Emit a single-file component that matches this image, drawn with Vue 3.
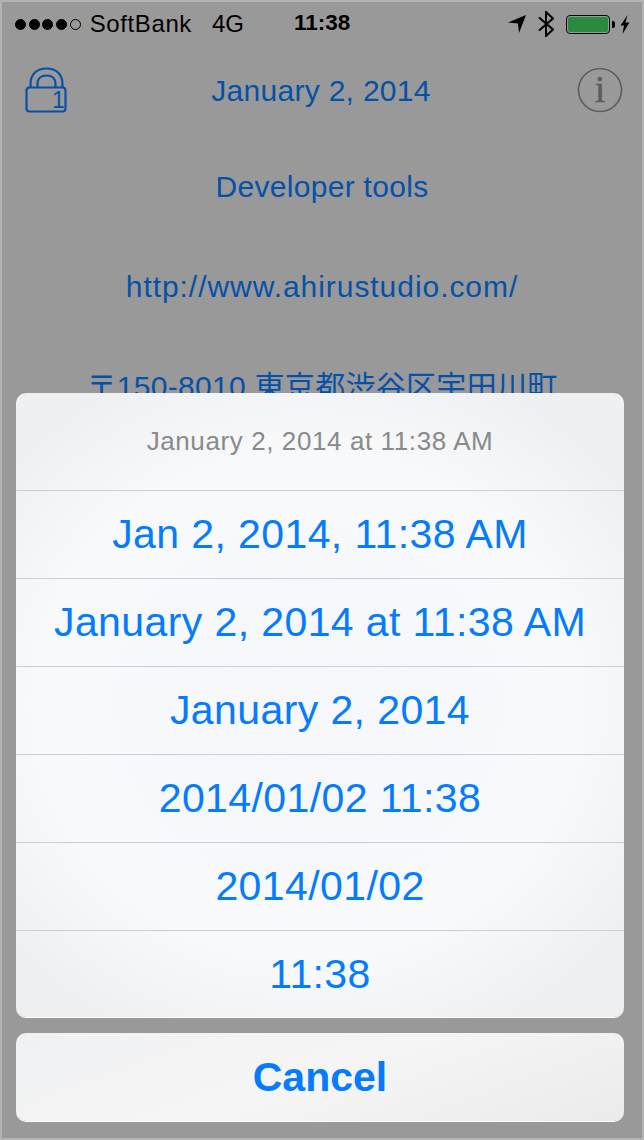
<script setup>
const options = [
  "Jan 2, 2014, 11:38 AM",
  "January 2, 2014 at 11:38 AM",
  "January 2, 2014",
  "2014/01/02 11:38",
  "2014/01/02",
  "11:38",
];
const signal = [1, 1, 1, 1, 0];
</script>

<template>
  <div class="screen">
    <div class="status">
      <div class="carrier">
        <span class="dots">
          <i v-for="(on, i) in signal" :key="i" class="dot" :class="{ on }"></i>
        </span>
        <span class="name">SoftBank</span>
        <span class="net">4G</span>
      </div>
      <div class="clock">11:38</div>
      <div class="tray">
        <svg class="arrow" width="18" height="18" viewBox="0 0 18 18">
          <path d="M0 7.500 L18 0 L11 18 L10 8.500 Z" fill="#000" />
        </svg>
        <svg class="bt" width="16" height="26" viewBox="0 0 16 26">
          <path d="M1 6.500 L15 18.500 L8 25 V1 L15 7.500 L1 19.500" fill="none" stroke="#000" stroke-width="2" />
        </svg>
        <div class="battery"><div class="juice"></div></div>
        <div class="nub"></div>
        <svg class="bolt" width="10" height="19" viewBox="0 0 10 19">
          <path d="M7.500 0 L0.500 10.500 H4 L2.500 19 L9.500 7.500 H5.500 Z" fill="#000" />
        </svg>
      </div>
    </div>

    <div class="head">
      <svg class="lock" width="42" height="46" viewBox="0 0 42 46">
        <path d="M5.500 20 V17 C5.500 7 12 1.500 21.500 1.500 C31 1.500 37.500 7 37.500 17 V20" fill="none" stroke="#0651a8" stroke-width="2.200" />
        <path d="M12.500 20 V17 C12.500 11.500 16 8.500 21.500 8.500 C27 8.500 30.500 11.500 30.500 17 V20" fill="none" stroke="#0651a8" stroke-width="2.200" />
        <rect x="1.500" y="20.500" width="39" height="24" rx="3" fill="none" stroke="#0651a8" stroke-width="2.200" />
        <text x="27" y="41" class="lock-num">1</text>
      </svg>
      <div class="date">January 2, 2014</div>
      <svg class="info" width="46" height="46" viewBox="0 0 46 46">
        <circle cx="23" cy="23" r="21.500" fill="none" stroke="#5c5c5c" stroke-width="1.600" />
        <text x="23" y="35" text-anchor="middle" class="info-i">i</text>
      </svg>
    </div>

    <div class="line first">Developer tools</div>
    <div class="line url">http://www.ahirustudio.com/</div>
    <div class="line">〒150-8010 東京都渋谷区宇田川町</div>

    <div class="sheet">
      <div class="group">
        <div class="title">January 2, 2014 at 11:38 AM</div>
        <div v-for="o in options" :key="o" class="opt">{{ o }}</div>
      </div>
      <div class="cancel">Cancel</div>
    </div>
  </div>
</template>

<style scoped>
.screen {
  position: relative;
  width: 644px;
  height: 1140px;
  box-sizing: border-box;
  border: 2px solid #b2b2b2;
  background: #999;
  overflow: hidden;
  font-family: "Liberation Sans", "Noto Sans CJK JP", sans-serif;
}

.status {
  display: flex;
  align-items: center;
  height: 40px;
  margin-top: 2px;
  padding: 0 12px 0 13px;
  color: #000;
  position: relative;
}
.carrier {
  display: flex;
  align-items: center;
  font-size: 24px;
}
.dots {
  display: flex;
  gap: 2.700px;
  margin-right: 9px;
}
.dot {
  display: block;
  box-sizing: border-box;
  width: 11px;
  height: 11px;
  border-radius: 50%;
  border: 1px solid #000;
}
.dot.on {
  background: #000;
}
.name {
  letter-spacing: 0.600px;
}
.net {
  margin-left: 20px;
}
.clock {
  position: absolute;
  left: 292px;
  top: 6px;
  font-size: 22.500px;
  font-weight: 700;
}
.tray {
  margin-left: auto;
  display: flex;
  align-items: center;
}
.arrow {
  margin-right: 12px;
}
.bt {
  margin-right: 12px;
}
.battery {
  width: 44px;
  height: 19px;
  box-sizing: border-box;
  border: 1px solid #000;
  border-radius: 4px;
  padding: 1px;
}
.juice {
  height: 100%;
  background: #2b8a3e;
  border-radius: 2px;
}
.nub {
  width: 3px;
  height: 7px;
  margin: 0 5px 0 2px;
  background: #000;
  border-radius: 0 2px 2px 0;
}

.head {
  display: flex;
  align-items: center;
  justify-content: space-between;
  margin-top: 23px;
  padding: 0 19px 0 23px;
  height: 46px;
  color: #0651a8;
}
.lock-num {
  font-family: "Liberation Sans", sans-serif;
  font-size: 23px;
  fill: #0651a8;
}
.date {
  font-size: 30px;
  letter-spacing: 0.300px;
  margin-left: -2px;
  margin-top: 2px;
}
.info-i {
  font-family: "Liberation Serif", serif;
  font-size: 38px;
  fill: #5c5c5c;
  stroke: #5c5c5c;
  stroke-width: 0.500px;
}
.line {
  margin-top: 67px;
  height: 33px;
  line-height: 33px;
  text-align: center;
  font-size: 30px;
  letter-spacing: 0.300px;
  color: #0651a8;
  white-space: nowrap;
}
.line.first {
  margin-top: 57px;
}
.line.url {
  letter-spacing: 0.950px;
}

.sheet {
  position: absolute;
  left: 14px;
  top: 391px;
  width: 608px;
  display: flex;
  flex-direction: column;
  gap: 16px;
}
.group,
.cancel {
  border-radius: 10px;
  box-shadow: 0 1px 0 #fff;
}
.group {
  background: radial-gradient(ellipse 64% 58% at 48% 50%, #f5f7fb 0%, #f7f9fb 70%, #eff0f2 100%);
}
.title {
  height: 97px;
  line-height: 96px;
  text-align: center;
  font-size: 26px;
  letter-spacing: 0.600px;
  color: #8a8a8a;
}
.opt {
  height: 87px;
  line-height: 86px;
  border-top: 1px solid #c6cfdf;
  text-align: center;
  font-size: 41px;
  letter-spacing: 0.400px;
  color: #057bfd;
}
.opt:last-child {
  height: 86px;
}
.cancel {
  height: 88px;
  line-height: 88px;
  text-align: center;
  font-size: 41px;
  font-weight: 700;
  color: #057bfd;
  background: linear-gradient(160deg, #f0f1f2 0%, #f5f5f6 50%, #ebebeb 100%);
}
</style>
